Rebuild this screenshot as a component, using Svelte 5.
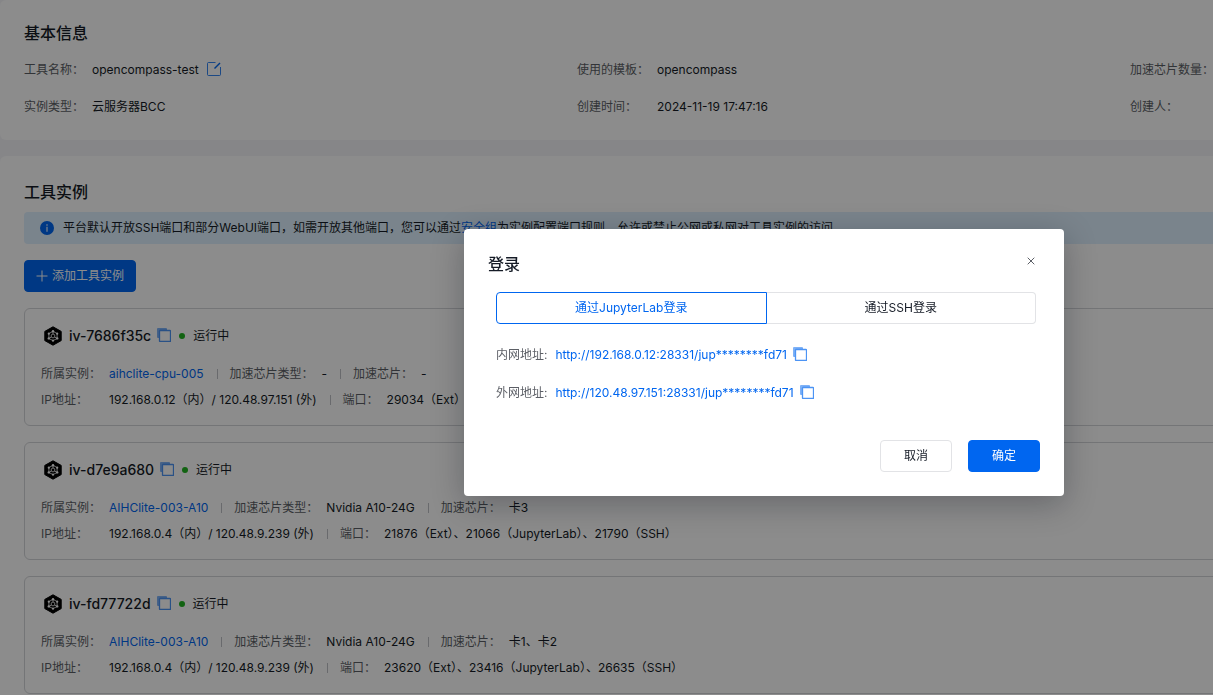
<script>
  const info = [
    [
      { label: '工具名称', value: 'opencompass-test', editable: true },
      { label: '实例类型', value: '云服务器BCC' }
    ],
    [
      { label: '使用的模板', value: 'opencompass' },
      { label: '创建时间', value: '2024-11-19 17:47:16' }
    ],
    [
      { label: '加速芯片数量', value: '' },
      { label: '创建人', value: '' }
    ]
  ];

  const instances = [
    {
      name: 'iv-7686f35c',
      host: 'aihclite-cpu-005',
      chipType: '-',
      chip: '-',
      ip: '192.168.0.12（内）/ 120.48.97.151 (外)',
      ports: '29034（Ext）'
    },
    {
      name: 'iv-d7e9a680',
      host: 'AIHClite-003-A10',
      chipType: 'Nvidia A10-24G',
      chip: '卡3',
      ip: '192.168.0.4（内）/ 120.48.9.239 (外)',
      ports: '21876（Ext）、21066（JupyterLab）、21790（SSH）'
    },
    {
      name: 'iv-fd77722d',
      host: 'AIHClite-003-A10',
      chipType: 'Nvidia A10-24G',
      chip: '卡1、卡2',
      ip: '192.168.0.4（内）/ 120.48.9.239 (外)',
      ports: '23620（Ext）、23416（JupyterLab）、26635（SSH）'
    }
  ];

  const addresses = [
    { label: '内网地址', url: 'http://192.168.0.12:28331/jup********fd71' },
    { label: '外网地址', url: 'http://120.48.97.151:28331/jup********fd71' }
  ];

  const tabs = ['通过JupyterLab登录', '通过SSH登录'];
  let active = $state(0);
</script>

{#snippet copyButton()}
  <button class="icon-btn copy" aria-label="复制">
    <svg width="14" height="14" viewBox="0 0 14 14" fill="none" stroke="currentColor">
      <path d="M2 9H1V1h8v1" stroke-width="2" stroke-linejoin="round" opacity=".5" />
      <rect x="2.5" y="2.5" width="11" height="11" rx=".5" stroke-width="1.3" opacity=".7" />
    </svg>
  </button>
{/snippet}

<div class="viewport">
  <div class="page">
    <section class="panel">
      <h2>基本信息</h2>
      <div class="info">
        {#each info as column}
          <dl>
            {#each column as item}
              <dt>{item.label}：</dt>
              <dd>
                {item.value}
                {#if item.editable}
                  <button class="icon-btn edit" aria-label="编辑">
                    <svg width="14" height="14" viewBox="0 0 14 14" fill="none" stroke="currentColor">
                      <path d="M8.5 .5H1.5a1 1 0 0 0-1 1v11a1 1 0 0 0 1 1h11a1 1 0 0 0 1-1V5" opacity=".8" />
                      <path d="M7.5 6.5 13 1" stroke-width="1.4" />
                    </svg>
                  </button>
                {/if}
              </dd>
            {/each}
          </dl>
        {/each}
      </div>
    </section>

    <section class="panel">
      <h2>工具实例</h2>
      <div class="notice">
        <svg width="14" height="14" viewBox="0 0 14 14">
          <circle cx="7" cy="7" r="7" fill="#0066f0" />
          <path d="M6.4 3.3h1.2v1.4H6.4zM6.4 5.8h1.2v5H6.4z" fill="#e6f2ff" />
        </svg>
        <p>平台默认开放SSH端口和部分WebUI端口，如需开放其他端口，您可以通过<a href="#security">安全组</a>为实例配置端口规则，允许或禁止公网或私网对工具实例的访问</p>
      </div>
      <button class="btn primary add">
        <svg width="12" height="12" viewBox="0 0 12 12" stroke="currentColor"><path d="M6 .5v11M.5 6h11" /></svg>
        添加工具实例
      </button>

      <div class="cards">
        {#each instances as item}
          <article class="card">
            <header>
              <svg class="logo" width="20" height="20" viewBox="0 0 20 20" fill="none">
                <path d="M10 .8 18.2 5.4v9.2L10 19.2 1.8 14.6V5.4z" fill="#000" stroke="#000" stroke-linejoin="round" />
                <g stroke="#fff" stroke-width=".8">
                  <path d="M10 5.3 14.1 7.6v4.8L10 14.7 5.9 12.4V7.6z" />
                  <circle cx="10" cy="10" r="1.9" />
                  <path d="M10 8V5.7M8.300 11l-2 1.200M11.700 11l2 1.200" />
                </g>
                <g fill="#fff">
                  <circle cx="10" cy="5.3" r="1.2" /><circle cx="14.2" cy="7.7" r="1.1" />
                  <circle cx="14.2" cy="12.4" r="1.2" /><circle cx="10" cy="14.7" r="1.1" />
                  <circle cx="5.8" cy="12.4" r="1.2" /><circle cx="5.8" cy="7.7" r="1.1" />
                </g>
              </svg>
              <h3>{item.name}</h3>
              {@render copyButton()}
              <span class="status">运行中</span>
            </header>
            <div class="row">
              <div class="field"><span class="label first">所属实例：</span><a href="#host">{item.host}</a></div>
              <div class="field"><span class="label">加速芯片类型：</span><span>{item.chipType}</span></div>
              <div class="field"><span class="label">加速芯片：</span><span>{item.chip}</span></div>
            </div>
            <div class="row">
              <div class="field"><span class="label first">IP地址：</span><span>{item.ip}</span></div>
              <div class="field"><span class="label">端口：</span><span>{item.ports}</span></div>
            </div>
          </article>
        {/each}
      </div>
    </section>
  </div>
</div>

<div class="mask"></div>
<div class="dialog" role="dialog" aria-modal="true" aria-labelledby="dialog-title">
  <div class="dialog-head">
    <h2 id="dialog-title">登录</h2>
    <button class="close" aria-label="关闭">
      <svg width="8" height="8" viewBox="0 0 8 8" stroke="currentColor"><path d="M.7.7l6.6 6.6M7.3.7.7 7.3" /></svg>
    </button>
  </div>
  <div class="dialog-body">
    <div class="tabs" role="tablist">
      {#each tabs as tab, i}
        <button role="tab" aria-selected={active === i} class:active={active === i} onclick={() => (active = i)}>{tab}</button>
      {/each}
    </div>
    {#each addresses as address}
      <div class="address">
        <span class="label">{address.label}:</span>
        <a href="#login">{address.url}</a>
        {@render copyButton()}
      </div>
    {/each}
  </div>
  <footer>
    <button class="btn">取消</button>
    <button class="btn primary">确定</button>
  </footer>
</div>

<style>
  :global(body) {
    background: #f5f5f8;
    font: 12px/20px Inter, "Noto Sans CJK SC", sans-serif;
    color: #151b26;
  }
  h2, h3, p, dl, dd { margin: 0; }
  h2 { font-size: 16px; line-height: 24px; font-weight: 500; }
  a { color: #0066f0; text-decoration: none; }
  button {
    font: inherit;
    color: inherit;
    background: none;
    border: 0;
    padding: 0;
    cursor: pointer;
  }
  svg { display: block; flex: none; }

  .viewport { height: 100vh; overflow: hidden; }
  .page {
    display: flex;
    flex-direction: column;
    gap: 16px;
    min-width: 1707px;
  }
  .panel { background: #fff; border-radius: 6px; padding: 24px; }
  .panel:first-child { padding-top: 21px; padding-bottom: 23px; }

  .info {
    display: grid;
    grid-template-columns: repeat(3, 1fr);
    margin-top: 15px;
  }
  dl {
    display: grid;
    grid-template-columns: auto 1fr;
    gap: 17px 8px;
  }
  dt, .label { color: #5c5f66; }
  dd { display: flex; align-items: center; gap: 8px; }
  .icon-btn { color: #0066f0; }
  .copy, .edit { padding-bottom: 2px; }

  .notice {
    display: flex;
    align-items: center;
    gap: 9px;
    margin-top: 8px;
    padding: 6px 16px;
    border-radius: 4px;
    background: #dff0ff;
  }
  .btn {
    display: inline-flex;
    align-items: center;
    justify-content: center;
    box-sizing: border-box;
    height: 32px;
    min-width: 72px;
    padding: 0 12px;
    border: 1px solid #e2e3e6;
    border-radius: 4px;
  }
  .primary { background: #0066f0; border-color: #0066f0; color: #fff; }
  .add { gap: 4px; padding: 0 11px; margin-top: 16px; }

  .cards { display: flex; flex-direction: column; gap: 16px; margin-top: 16px; }
  .card { border: 1px solid #d4d6d9; border-radius: 6px; padding: 16px 16px 15px; }
  header { display: flex; align-items: center; margin-bottom: 17px; }
  .logo { margin: 0 6px 0 2px; }
  h3 { font-size: 14px; line-height: 22px; font-weight: 500; }
  header .icon-btn { margin-left: 6px; }
  .status { display: flex; align-items: center; gap: 8px; margin-left: 8px; }
  .status::before {
    content: "";
    width: 6px;
    height: 6px;
    border-radius: 50%;
    background: #22b422;
  }
  .row { display: flex; align-items: center; }
  .row + .row { margin-top: 6px; }
  .field { display: flex; gap: 8px; align-items: center; white-space: nowrap; }
  .first { min-width: 60px; }
  .field + .field::before {
    content: "";
    width: 1px;
    height: 10px;
    margin: 0 4px 0 13px;
    background: #c0c2c6;
  }

  .mask { position: fixed; inset: 0; background: rgba(0, 0, 0, .45); }
  .dialog {
    position: absolute;
    top: 229px;
    left: 464px;
    box-sizing: border-box;
    width: 600px;
    padding: 23px 24px 24px;
    border-radius: 4px;
    background: #fff;
    box-shadow: 0 8px 32px rgba(7, 12, 20, .28);
  }
  .dialog-head { display: flex; align-items: flex-start; justify-content: space-between; }
  .close { padding: 5px; color: #5c5f66; }
  .dialog-body { padding: 16px 4px 0 8px; }
  .tabs { display: flex; }
  .tabs button {
    flex: 1;
    height: 32px;
    border: 1px solid #e2e3e6;
    border-radius: 0 4px 4px 0;
  }
  .tabs button:first-child { border-radius: 4px 0 0 4px; }
  .tabs button + button { border-left: 0; }
  .tabs .active { border-color: #0066f0; color: #0066f0; }
  .address { display: flex; align-items: center; margin-top: 18px; }
  .tabs + .address { margin-top: 21px; }
  .address .label { margin-right: 8px; }
  .address .icon-btn { margin-left: 6px; padding-bottom: 3px; }
  footer { display: flex; justify-content: flex-end; gap: 16px; margin-top: 37px; }
</style>
